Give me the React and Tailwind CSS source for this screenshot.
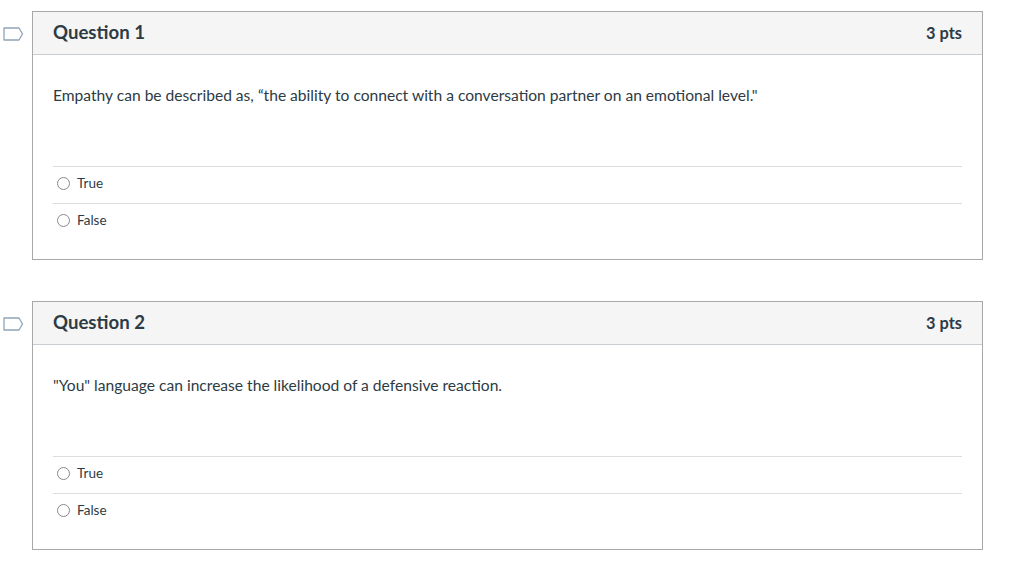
const QUESTIONS = [
    {
        id: 1,
        points: "3 pts",
        text: "Empathy can be described as, \u201cthe ability to connect with a conversation partner on an emotional level.\"",
        answers: ["True", "False"]
    },
    {
        id: 2,
        points: "3 pts",
        text: "\"You\" language can increase the likelihood of a defensive reaction.",
        answers: ["True", "False"]
    }
];

function FlagIcon() {
    return (
        <svg width="22" height="14" viewBox="0 0 22 14" className="block">
            <path
                d="M1 1 H16 L19.5 7 L16 13 H1 Z"
                fill="none"
                stroke="#8fa4b8"
                strokeWidth="1.3"
                strokeLinejoin="round"
            />
        </svg>
    );
}

function Question({ q }) {
    return (
        <div className="flex items-start">
            {/* bookmark flag */}
            <div className="w-[32px] pl-[3px] pt-[16px]">
                <FlagIcon />
            </div>

            <div className="flex-1 border border-[#a8a8a8] bg-white">
                <div className="h-[43px] flex items-center justify-between px-[20px] bg-[#f5f5f5] border-b border-[#c7cdd1]">
                    <h2 className="text-[18.6px] font-bold text-[#2d3b45]">
                        Question {q.id}
                    </h2>
                    <span className="text-[16.4px] font-bold text-[#2d3b45]">
                        {q.points}
                    </span>
                </div>

                <div className="px-[20px] pt-[29px] pb-[19px]">
                    <p className="text-[15.6px] leading-[22px] text-[#2d3b45]">
                        {q.text}
                    </p>

                    <div className="mt-[60px]">
                        {q.answers.map((a) => (
                            <div
                                key={a}
                                className="h-[37px] flex items-center border-t border-[#dddddd] pl-[4px] pb-[3px]"
                            >
                                <span className="w-[13px] h-[13px] rounded-full border border-[#8a8a8a] bg-white mr-[7px]" />
                                <span className="text-[13.5px] text-[#2d3b45]">
                                    {a}
                                </span>
                            </div>
                        ))}
                    </div>
                </div>
            </div>
        </div>
    );
}

export default function App() {
    return (
        <div
            className="min-h-screen bg-white pt-[11px] pr-[41px]"
            style={{ fontFamily: "Lato, 'Noto Sans', sans-serif" }}
        >
            <div className="flex flex-col gap-[41px]">
                {QUESTIONS.map((q) => (
                    <Question key={q.id} q={q} />
                ))}
            </div>
        </div>
    );
}
